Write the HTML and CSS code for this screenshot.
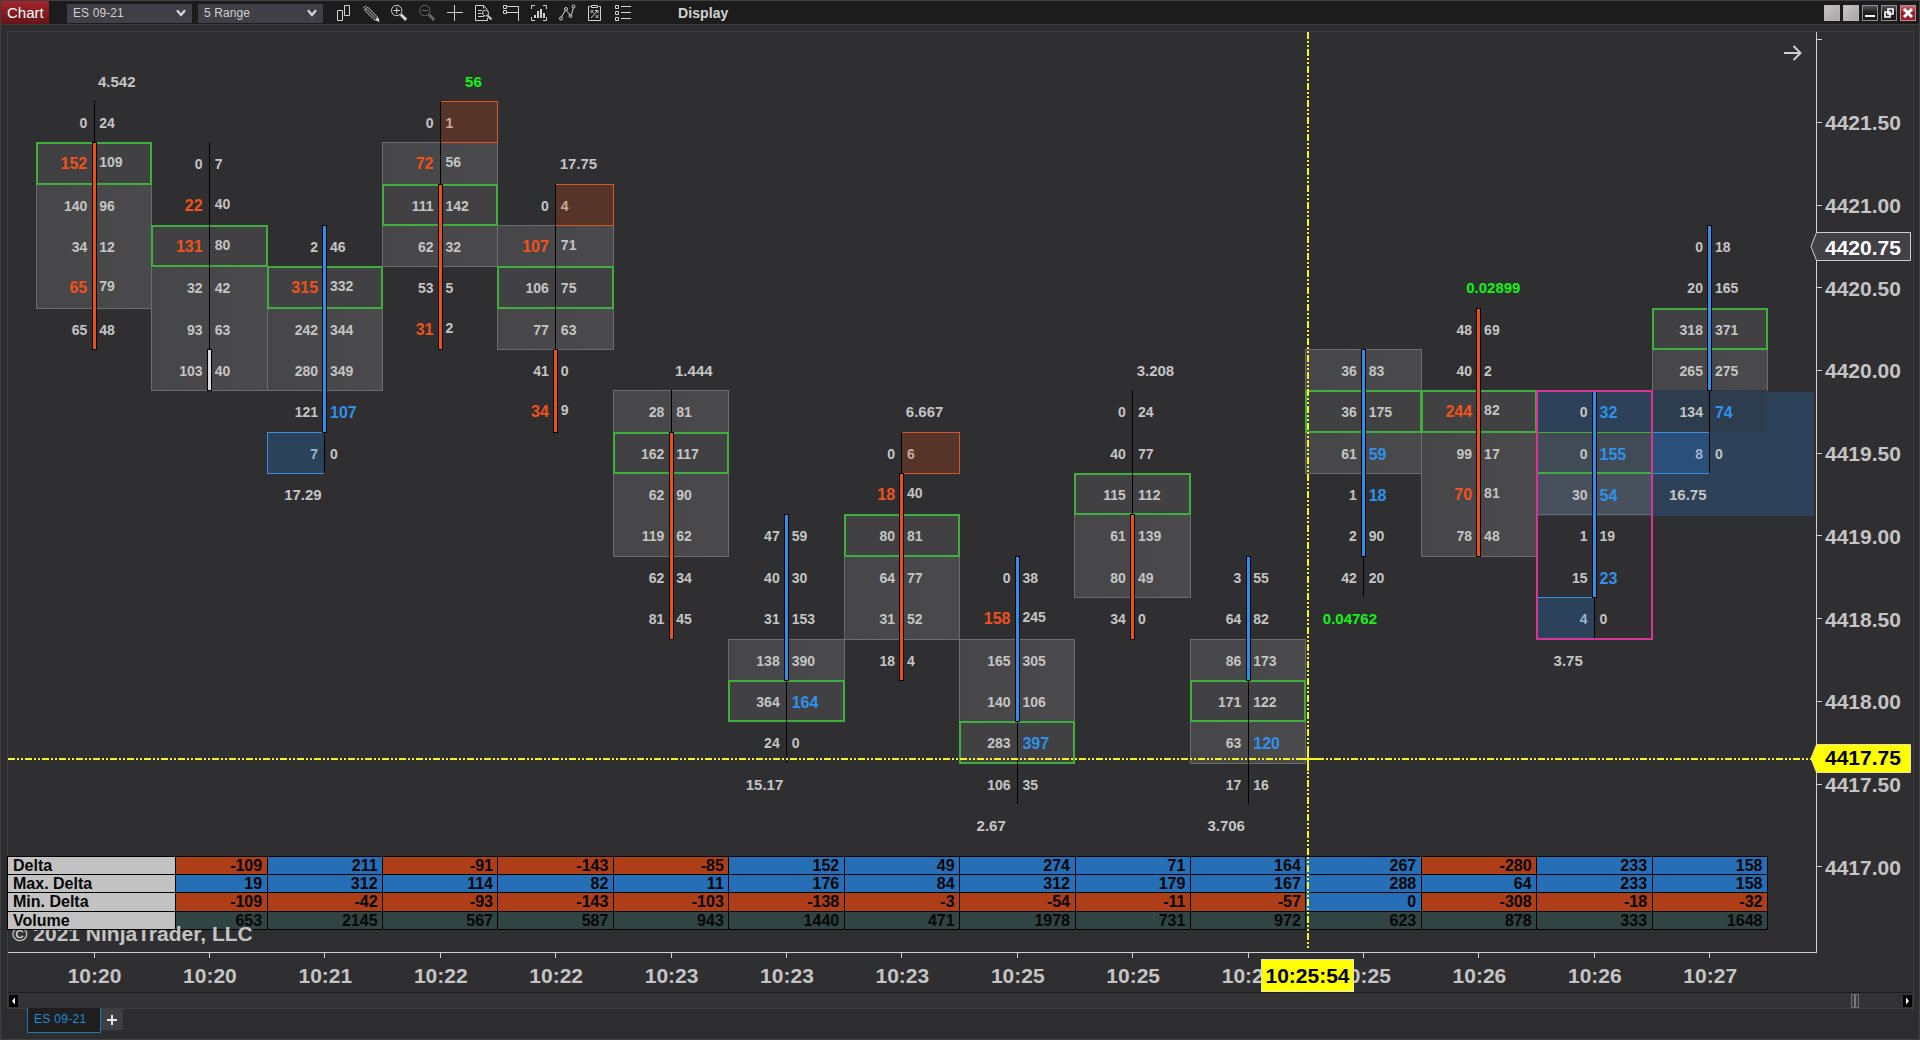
FILE: index.html
```html
<!DOCTYPE html>
<html lang="en">
<head>
<meta charset="utf-8">
<title>Chart - ES 09-21</title>
<link rel="stylesheet" href="styles.css">
</head>
<body>
<div class="window">
  <header class="titlebar">
    <div class="brand">Chart</div>
    <div class="select instrument"><span>ES 09-21</span><svg width="10" height="8" viewBox="0 0 10 8"><path d="M1 1.2 5 6l4-4.8" fill="none" stroke="#d6d6d6" stroke-width="2.2"/></svg></div>
    <div class="select"><span>5 Range</span><svg width="10" height="8" viewBox="0 0 10 8"><path d="M1 1.2 5 6l4-4.8" fill="none" stroke="#d6d6d6" stroke-width="2.2"/></svg></div>
    <nav class="tools">
      <svg class="icon" viewBox="0 0 18 18"><path d="M2.500 6.500h5v10h-5zM9.500 1.500h5v10h-5z"/></svg>
      <svg class="icon" viewBox="0 0 18 18"><path d="M0 4.500 3 1.500M1.500 6 4.500 3 14 12.500 15.500 17 11 15.500zM3 4.500l9.500 9.500"/><path class="solid" d="m13 15 2-1 1 3.500z"/></svg>
      <svg class="icon" viewBox="0 0 18 18"><circle cx="5.700" cy="6.500" r="5.200"/><path d="M2.500 6.500h6.500M5.700 3.300v6.400"/><path class="thick" d="m9.800 10.500 5.400 5.400"/></svg>
      <svg class="icon dim" viewBox="0 0 18 18"><circle cx="5.700" cy="6.500" r="5.200"/><path d="M2.500 6.500h6.500"/><path class="thick" d="m9.800 10.500 5.400 5.400"/></svg>
      <svg class="icon" viewBox="0 0 18 18"><path d="M0 8.500h16M7.500 1v16"/></svg>
      <svg class="icon" viewBox="0 0 18 18"><path d="M12.500 14v2.500h-12v-15h8l4 4M8.500 1.500v3M3 6.500h4M3 9.500h3.500M3 12.500h6"/><circle cx="10.500" cy="9" r="3"/><path d="m12.500 11.500 4 4" stroke-width="2"/></svg>
      <svg class="icon" viewBox="0 0 18 18"><path d="M.5 1.500h3v3h-3zM.5 6.500h3v3h-3zM4 2.500h11.500V17M4 8.500h11.500"/></svg>
      <svg class="icon" viewBox="0 0 18 18"><path d="M4 1.500H.5V5M12 1.500h3.500V5M4 16.500H.5V13M12 16.500h3.500V13"/><path stroke-width="2" d="M4 14v-3M7 14V7M10 14V5M13 14V9"/></svg>
      <svg class="icon" viewBox="0 0 18 18"><path d="m2.500 13 4-7M7.500 6.500l4 5M12.500 10.500l2-7"/><circle cx="2" cy="14.500" r="1.500"/><circle cx="7" cy="5" r="1.500"/><circle cx="11.500" cy="12" r="1.500"/><circle cx="14.500" cy="2.500" r="1.500"/></svg>
      <svg class="icon" viewBox="0 0 18 18"><path d="M3.500 2.500h-2v14h12v-14h-2M4.500 1.500h6v2h-6zM3.500 6l3 3M6.500 6l-3 3M8.500 11l3 3M11.500 11l-3 3M4 14l6-7M8 6.500h3v3"/></svg>
      <svg class="icon" viewBox="0 0 18 18"><path d="M.5 1.500h3v3h-3zM.5 7.500h3v3h-3zM.5 13.500h3v3h-3zM6 2.500h10M6 8.500h10M6 14.500h10"/></svg>
    </nav>
    <div class="display">Display</div>
    <div class="controls">
      <i class="ctl plain"></i><i class="ctl plain"></i>
      <i class="ctl"><svg width="14" height="14"><path d="M2 10h10" stroke="#fff" stroke-width="2"/></svg></i>
      <i class="ctl"><svg width="14" height="14"><path d="M6 3h5v5H6zM3 6h5v5H3z" fill="#2a2a2c" stroke="#fff" stroke-width="1.600"/></svg></i>
      <i class="ctl close"><svg width="14" height="14"><path d="m3 3 8 8M11 3l-8 8" stroke="#fff" stroke-width="3"/></svg></i>
    </div>
  </header>

  <main class="frame">
    <section class="plot">
      <div class="zone"></div>
      <div class="bars" id="bars"></div>
      <div class="summary" id="summary"></div>
      <div class="copyright">© 2021 NinjaTrader, LLC</div>
      <svg class="goto" width="20" height="16" viewBox="0 0 20 16"><path d="M1 8h17M10.500 1l7 7-7 7" fill="none" stroke="#d0d0d0" stroke-width="2"/></svg>
    </section>
    <aside class="prices" id="prices"></aside>
    <section class="times" id="times"></section>
    <svg class="cross" width="1810" height="921"><path d="M1300 0v918M0 727h1808" fill="none" stroke="#f6f626" stroke-width="2" stroke-dasharray="7 2 2 2 2 2"/><path d="M1300 715v24M1290 727h21" stroke="#f6f626" stroke-width="2"/></svg>
    <div class="tag last"><svg width="102" height="30" viewBox="0 0 102 30"><path d="M6.500.500h94v28h-94L1 14.500z" fill="#414146" stroke="#cfcfcf"/></svg><span>4420.75</span></div>
    <div class="tag cursor"><svg width="102" height="30" viewBox="0 0 102 30"><path d="M6.500.500h94v28h-94L1 14.500z" fill="#ff0" stroke="#e4e4a0"/></svg><span>4417.75</span></div>
    <div class="timetag">10:25:54</div>
    <div class="scroll">
      <i class="arrow"><svg width="9" height="12"><path d="M6 2.500v7L3 6z" fill="#fff"/></svg></i>
      <i class="thumb"></i>
      <i class="arrow"><svg width="9" height="12"><path d="M3 2.500v7L6 6z" fill="#fff"/></svg></i>
    </div>
  </main>
  <footer class="tabs">
    <div class="tab">ES 09-21</div>
    <div class="add"><svg width="12" height="12"><path d="M6 1v10M1 6h10" stroke="#e6e6e6" stroke-width="2"/></svg></div>
  </footer>
</div>
<script src="chart.js"></script>
</body>
</html>
```
FILE: styles.css
```css
* { box-sizing: border-box; }
body {
  margin: 0;
  background: #2d2d2f;
  color: #c4c4c4;
  font-family: "Liberation Sans", Arial, sans-serif;
}
.window {
  width: 1920px;
  height: 1040px;
  display: flex;
  flex-direction: column;
  border: 1px solid #404042;
  overflow: hidden;
}

/* title bar */
.titlebar {
  height: 24px;
  display: flex;
  align-items: center;
  background: #1c1c1c;
  border-bottom: 1px solid #3c3c3c;
}
.brand {
  width: 48px;
  height: 23px;
  padding-left: 6px;
  background: linear-gradient(#a5242b, #651418);
  color: #fff;
  font-size: 15px;
  line-height: 24px;
}
.select {
  width: 125px;
  height: 19px;
  margin: 1px 0 0 6px;
  padding: 0 6px;
  display: flex;
  align-items: center;
  justify-content: space-between;
  background: #3f3f45;
  color: #d0d0d0;
  font-size: 12px;
  letter-spacing: .1px;
}
.instrument { margin-left: 18px; }
.tools { display: flex; gap: 10px; margin: 0 0 0 12px; }
.icon {
  width: 18px;
  height: 18px;
  margin-top: 1px;
  fill: none;
  stroke: #d2d2d2;
}
.icon .thick { stroke-width: 3; }
.icon .solid { fill: #d2d2d2; }
.dim { stroke: #666; }
.display {
  margin-left: 45px;
  color: #d2d2d2;
  font-size: 14px;
  font-weight: bold;
  letter-spacing: .1px;
}
.controls { display: flex; gap: 3px; margin: 1px 3px 0 auto; }
.ctl {
  width: 16px;
  height: 16px;
  border: 1px solid #8c8c8c;
  background: linear-gradient(#55555a, #1c1c1e 50%);
}
.ctl svg { display: block; }
.plain { background: linear-gradient(135deg, #c8c4c6, #a8a4a6); border-color: #bab6b8; }
.close { background: linear-gradient(#c06a72, #96212c 50%); border-color: #c08a8e; }

/* chart frame */
.frame {
  position: relative;
  width: 1907px;
  height: 978px;
  margin: 6px 0 0 6px;
  display: grid;
  grid-template-columns: 1808px 1fr;
  grid-template-rows: 920px 41px 1fr;
  border: 1px solid #3f3f41;
  background: #2f2f31;
}
.plot { position: relative; padding-top: 27.500px; }

/* footprint bars */
.bars { display: flex; margin-left: 27.840px; position: relative; }
.bar {
  flex: none;
  width: 115.420px;
  display: grid;
  grid-template-columns: 1fr 1fr;
  grid-template-rows: repeat(19, 41.370px);
}
.value-area {
  grid-column: 1 / -1;
  margin: 0 -1px -1px 0;
  background: linear-gradient(90deg, #464648, #4a4a4c);
  border: 1px solid #6c6c6e;
}
.poc {
  grid-column: 1 / -1;
  margin: 0 -1px -1px 0;
  background: #414143;
  border: 2px solid #3fae3f;
}
.hot, .cold { margin: 0 -1px -1px 0; border: 1px solid; }
.hot { grid-column: 2; background: #573429; border-color: #d4562a; }
.cold { grid-column: 1; background: #2c425a; border-color: #3d8ee0; border-right: 0; margin-right: 0; }
.bid, .ask {
  z-index: 1;
  padding-top: 2px;
  font-size: 14px;
  font-weight: bold;
  line-height: 41px;
}
.bid { grid-column: 1; text-align: right; padding-right: 6.300px; }
.ask { grid-column: 2; padding-left: 5.700px; }
.sell { color: #f0521a; font-size: 16px; }
.buy { color: #2f91ec; font-size: 16px; }
.raised { padding-top: 0; }
.sell.raised { padding-top: 1px; }
.in-hot { color: #cda99c; }
.in-cold { color: #9ab4ce; }
.signal {
  grid-column: 1 / -1;
  padding: 1px 15.700px 0 17.500px;
  font-size: 15px;
  font-weight: bold;
  line-height: 42px;
  z-index: 1;
}
.above { text-align: right; }
.strong { color: #12f412; }
.wick { grid-column: 2; width: 1px; background: #000; z-index: 1; }
.body { grid-column: 2; width: 5px; margin: 0 0 -1px -2px; border: 1px solid #000; z-index: 2; }
.down .body { background: #ee5014; }
.up .body { background: #2b8fee; }
.flat .body { background: #d8d8d8; }
.selected { grid-column: 1 / -1; border: 2px solid #d83497; margin: 0 -1px -1px 0; z-index: 3; }
.tinted .value-area { background: #47505c; }
.tinted .poc { background: #404b56; border-left: 0; border-right: 0; border-top-width: 1px; }
.shade { grid-column: 1 / -1; background: #2e3d4e; }
.shade ~ .cold { background: #2a5079; }
.zone {
  position: absolute;
  left: 1528px;
  top: 360px;
  width: 278px;
  height: 124px;
  background: #2d4258;
}

/* summary rows */
.summary {
  position: relative;
  width: 1760px;
  margin-top: 10.400px;
  display: grid;
  grid-template-columns: 167.400px 91.280px repeat(13, 115.420px);
  grid-template-rows: repeat(4, 18.300px);
  color: #060606;
  font-size: 16px;
  font-weight: bold;
  line-height: 17px;
}
.summary div {
  margin: 0 -1px -1px 0;
  padding-right: 4.500px;
  border: 1px solid #000;
  text-align: right;
}
.summary .name { position: relative; z-index: 2; margin-left: -1px; padding-left: 5px; background: #c2c2c2; text-align: left; }
.summary .pos { background: #266eb6; }
.summary .neg { background: #ae3e17; }
.summary .vol { background: #304444; }
.copyright {
  position: absolute;
  left: 4px;
  top: 890px;
  z-index: 1;
  color: #c4c4c4;
  font-size: 21px;
  font-weight: bold;
  line-height: 24px;
}
.goto { position: absolute; left: 1775px; top: 13px; }

/* axes */
.prices {
  border-left: 1px solid #d0d0d0;
  font-size: 21px;
  font-weight: bold;
}
.prices div {
  height: 82.740px;
  display: flex;
  align-items: center;
  gap: 3px;
  line-height: 24px;
}
.prices div::before { content: ""; width: 5px; height: 1px; background: #d0d0d0; }
.prices span { padding-top: 2px; }
.prices .top { height: 48.930px; align-items: flex-start; padding-top: 7px; }
.times {
  grid-column: 1 / -1;
  display: flex;
  padding-left: 28.340px;
  background: linear-gradient(#d0d0d0, #d0d0d0) 0 0 / 1809px 1px no-repeat;
  border-bottom: 1px solid #1e1e20;
  font-size: 21px;
  font-weight: bold;
}
.times div {
  width: 115.420px;
  display: flex;
  flex-direction: column;
  align-items: center;
  line-height: 24px;
  gap: 6px;
}
.times div::before { content: ""; width: 1px; height: 6px; background: #d0d0d0; }
.times span { padding-left: 1px; }
.cross { position: absolute; left: 0; top: 0; z-index: 4; }
.tag { position: absolute; left: 1802px; z-index: 5; width: 102px; height: 30px; font-size: 21px; font-weight: bold; }
.tag svg { position: absolute; left: 0; top: 0; }
.tag span { position: relative; display: block; padding-left: 15px; line-height: 31px; }
.last { top: 200px; color: #fff; }
.cursor { top: 712px; color: #000; }
.cursor span { line-height: 28px; }
.timetag {
  position: absolute;
  left: 1253px;
  top: 927px;
  z-index: 5;
  width: 93px;
  height: 33px;
  border: 1px solid #e8e8b0;
  background: #ff0;
  color: #000;
  font-size: 21px;
  font-weight: bold;
  line-height: 31px;
  text-align: center;
  white-space: nowrap;
}
.scroll {
  grid-column: 1 / -1;
  display: flex;
  align-items: center;
  padding: 0 1px;
  background: #333335;
}
.arrow { width: 9px; height: 12px; background: #000; }
.arrow svg { display: block; }
.thumb { width: 8px; height: 14px; margin: 0 44px 0 auto; border: 1px solid #6e6e70; background: linear-gradient(90deg, #3a3a3c 33%, #77777a 34% 60%, #3a3a3c 61%); }

/* workspace tabs */
.tabs { display: flex; align-items: flex-start; padding-left: 26px; }
.tab {
  width: 74px;
  height: 25px;
  margin-top: -1px;
  padding-left: 6px;
  z-index: 1;
  border: 1px solid #2374ae;
  border-top: 0;
  background: #1e1e1f;
  color: #2289d2;
  font-size: 12px;
  letter-spacing: .3px;
  line-height: 22px;
}
.add { width: 22px; height: 21px; background: #3e3e44; display: flex; align-items: center; justify-content: center; }
```
FILE: chart.js
```js
// Each level is [bid, ask, flag]: S = sell imbalance, B = buy imbalance,
// H = unfinished high, L = unfinished low. Row 0 is 4421.50, one row per tick.
const bars = [
  { time: '10:20', dir: 'down', first: 0, va: [1, 4], poc: 1, body: [1, 5], label: [-1, '4.542'],
    levels: [[0, 24], [152, 109, 'S'], [140, 96], [34, 12], [65, 79, 'S'], [65, 48]] },
  { time: '10:20', dir: 'flat', first: 1, va: [3, 6], poc: 3, body: [6, 6],
    levels: [[0, 7], [22, 40, 'S'], [131, 80, 'S'], [32, 42], [93, 63], [103, 40]], sum: [-109, 19, -109, 653] },
  { time: '10:21', dir: 'up', first: 3, va: [4, 6], poc: 4, body: [3, 7], label: [9, '17.29'],
    levels: [[2, 46], [315, 332, 'S'], [242, 344], [280, 349], [121, 107, 'B'], [7, 0, 'L']], sum: [211, 312, -42, 2145] },
  { time: '10:22', dir: 'down', first: 0, va: [1, 3], poc: 2, body: [2, 5], label: [-1, '56', true],
    levels: [[0, 1, 'H'], [72, 56, 'S'], [111, 142], [62, 32], [53, 5], [31, 2, 'S']], sum: [-91, 114, -93, 567] },
  { time: '10:22', dir: 'down', first: 2, va: [3, 5], poc: 4, body: [6, 7], label: [1, '17.75'],
    levels: [[0, 4, 'H'], [107, 71, 'S'], [106, 75], [77, 63], [41, 0], [34, 9, 'S']], sum: [-143, 82, -143, 587] },
  { time: '10:23', dir: 'down', first: 7, va: [7, 10], poc: 8, body: [8, 12], label: [6, '1.444'],
    levels: [[28, 81], [162, 117], [62, 90], [119, 62], [62, 34], [81, 45]], sum: [-85, 11, -103, 943] },
  { time: '10:23', dir: 'up', first: 10, va: [13, 14], poc: 14, body: [10, 13], label: [16, '15.17'],
    levels: [[47, 59], [40, 30], [31, 153], [138, 390], [364, 164, 'B'], [24, 0]], sum: [152, 176, -138, 1440] },
  { time: '10:23', dir: 'down', first: 8, va: [10, 12], poc: 10, body: [9, 13], label: [7, '6.667'],
    levels: [[0, 6, 'H'], [18, 40, 'S'], [80, 81], [64, 77], [31, 52], [18, 4]], sum: [49, 84, -3, 471] },
  { time: '10:25', dir: 'up', first: 11, va: [13, 15], poc: 15, body: [11, 14], label: [17, '2.67'],
    levels: [[0, 38], [158, 245, 'S'], [165, 305], [140, 106], [283, 397, 'B'], [106, 35]], sum: [274, 312, -54, 1978] },
  { time: '10:25', dir: 'down', first: 7, va: [9, 11], poc: 9, body: [10, 12], label: [6, '3.208'],
    levels: [[0, 24], [40, 77], [115, 112], [61, 139], [80, 49], [34, 0]], sum: [71, 179, -11, 731] },
  { time: '10:25', dir: 'up', first: 11, va: [13, 15], poc: 14, body: [11, 13], label: [17, '3.706'],
    levels: [[3, 55], [64, 82], [86, 173], [171, 122], [63, 120, 'B'], [17, 16]], sum: [164, 167, -57, 972] },
  { time: '10:25', dir: 'up', first: 6, va: [6, 8], poc: 7, body: [6, 10], label: [12, '0.04762', true],
    levels: [[36, 83], [36, 175], [61, 59, 'B'], [1, 18, 'B'], [2, 90], [42, 20]], sum: [267, 288, 0, 623] },
  { time: '10:26', dir: 'down', first: 5, va: [7, 10], poc: 7, body: [5, 10], label: [4, '0.02899', true],
    levels: [[48, 69], [40, 2], [244, 82, 'S'], [99, 17], [70, 81, 'S'], [78, 48]], sum: [-280, 64, -308, 878] },
  { time: '10:26', dir: 'up', first: 7, va: [8, 9], poc: 8, body: [7, 11], label: [13, '3.75'], selected: true,
    levels: [[0, 32, 'B'], [0, 155, 'B'], [30, 54, 'B'], [1, 19], [15, 23, 'B'], [4, 0, 'L']], sum: [233, 233, -18, 333] },
  { time: '10:27', dir: 'up', first: 3, va: [5, 6], poc: 5, body: [3, 6], label: [9, '16.75'], shade: 7,
    levels: [[0, 18], [20, 165], [318, 371], [265, 275], [134, 74, 'B'], [8, 0, 'L']], sum: [158, 158, -32, 1648] }
];

// Builds one grid item spanning price rows a..b.
const item = (cls, a, b, text = '') =>
  `<div class="${cls}" style="grid-row:${a + 2}/${b + 3}">${text}</div>`;

document.getElementById('bars').innerHTML = bars.map(b => {
  const last = b.first + b.levels.length - 1;
  let html = item('value-area', ...b.va) + item('poc', b.poc, b.poc);
  if (b.shade) html += item('shade', b.shade, b.shade);
  b.levels.forEach(([bid, ask, flag], i) => {
    const r = b.first + i;
    if (flag === 'H') html += item('hot', r, r);
    if (flag === 'L') html += item('cold', r, r);
    html += item('bid' + (flag === 'S' ? ' sell raised' : flag === 'L' ? ' in-cold' : ''), r, r, bid);
    html += item('ask' + (flag === 'B' ? ' buy' : flag === 'S' ? ' raised' : flag === 'H' ? ' in-hot' : ''), r, r, ask);
  });
  html += item('wick', b.first, last) + item('body', ...b.body);
  if (b.selected) html += item('selected', b.first, last);
  if (b.label) {
    const [row, text, strong] = b.label;
    html += item('signal' + (row < b.first ? ' above' : '') + (strong ? ' strong' : ''), row, row, text);
  }
  return `<div class="bar ${b.dir}${b.selected ? ' tinted' : ''}">${html}</div>`;
}).join('');

document.getElementById('summary').innerHTML = ['Delta', 'Max. Delta', 'Min. Delta', 'Volume'].map((name, k) =>
  `<div class="name">${name}</div>` + bars.slice(1).map(b =>
    `<div class="${k === 3 ? 'vol' : b.sum[k] < 0 ? 'neg' : 'pos'}">${b.sum[k]}</div>`).join('')).join('');

document.getElementById('times').innerHTML = bars.map(b => `<div><span>${b.time}</span></div>`).join('');

let prices = '<div class="top"></div>';
for (let p = 4421.5; p >= 4417; p -= 0.5) prices += `<div><span>${p.toFixed(2)}</span></div>`;
document.getElementById('prices').innerHTML = prices;
```
